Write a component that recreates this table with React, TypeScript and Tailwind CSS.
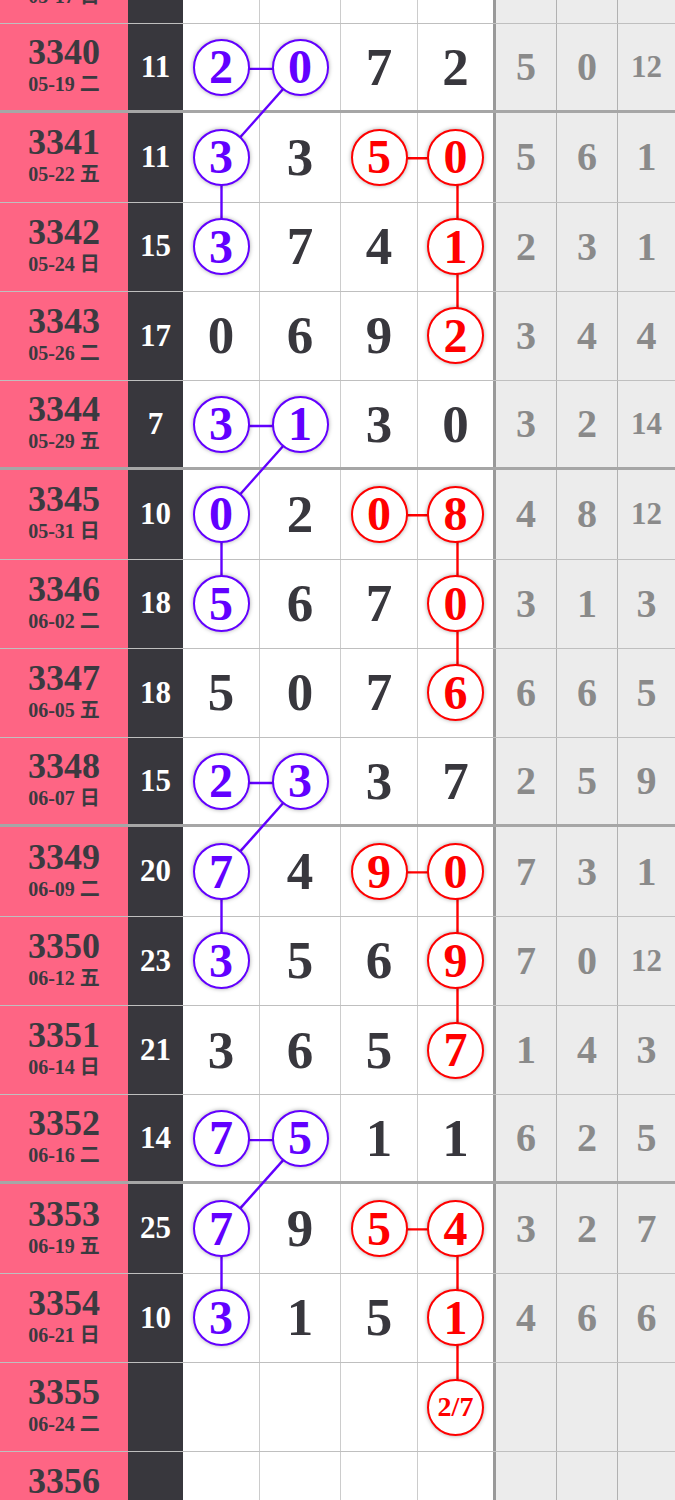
import React from 'react'

const ROW_H = 89.27
const TOP = -65.27
const NUM_W = [77, 81, 77, 78]
const NUM_X = [38.5, 118, 197, 274.5]

type Row = {
  id: string
  date?: string
  sum?: string
  nums: string[]
  marks: string
  stats: string[]
  thick?: boolean
}

const rows: Row[] = [
  { id: '3339', date: '05-17 日', nums: ['', '', '', ''], marks: '----', stats: ['', '', ''] },
  { id: '3340', date: '05-19 二', sum: '11', nums: ['2', '0', '7', '2'], marks: 'pp--', stats: ['5', '0', '12'], thick: true },
  { id: '3341', date: '05-22 五', sum: '11', nums: ['3', '3', '5', '0'], marks: 'p-rr', stats: ['5', '6', '1'] },
  { id: '3342', date: '05-24 日', sum: '15', nums: ['3', '7', '4', '1'], marks: 'p--r', stats: ['2', '3', '1'] },
  { id: '3343', date: '05-26 二', sum: '17', nums: ['0', '6', '9', '2'], marks: '---r', stats: ['3', '4', '4'] },
  { id: '3344', date: '05-29 五', sum: '7', nums: ['3', '1', '3', '0'], marks: 'pp--', stats: ['3', '2', '14'], thick: true },
  { id: '3345', date: '05-31 日', sum: '10', nums: ['0', '2', '0', '8'], marks: 'p-rr', stats: ['4', '8', '12'] },
  { id: '3346', date: '06-02 二', sum: '18', nums: ['5', '6', '7', '0'], marks: 'p--r', stats: ['3', '1', '3'] },
  { id: '3347', date: '06-05 五', sum: '18', nums: ['5', '0', '7', '6'], marks: '---r', stats: ['6', '6', '5'] },
  { id: '3348', date: '06-07 日', sum: '15', nums: ['2', '3', '3', '7'], marks: 'pp--', stats: ['2', '5', '9'], thick: true },
  { id: '3349', date: '06-09 二', sum: '20', nums: ['7', '4', '9', '0'], marks: 'p-rr', stats: ['7', '3', '1'] },
  { id: '3350', date: '06-12 五', sum: '23', nums: ['3', '5', '6', '9'], marks: 'p--r', stats: ['7', '0', '12'] },
  { id: '3351', date: '06-14 日', sum: '21', nums: ['3', '6', '5', '7'], marks: '---r', stats: ['1', '4', '3'] },
  { id: '3352', date: '06-16 二', sum: '14', nums: ['7', '5', '1', '1'], marks: 'pp--', stats: ['6', '2', '5'], thick: true },
  { id: '3353', date: '06-19 五', sum: '25', nums: ['7', '9', '5', '4'], marks: 'p-rr', stats: ['3', '2', '7'] },
  { id: '3354', date: '06-21 日', sum: '10', nums: ['3', '1', '5', '1'], marks: 'p--r', stats: ['4', '6', '6'] },
  { id: '3355', date: '06-24 二', nums: ['', '', '', '2/7'], marks: '---r', stats: ['', '', ''] },
  { id: '3356', nums: ['', '', '', ''], marks: '----', stats: ['', '', ''] },
]

// connecting lines: [row, col] -> [row, col]
const segs: { a: [number, number]; b: [number, number]; c: string }[] = []
for (const b of [1, 5, 9, 13]) {
  segs.push({ a: [b, 0], b: [b, 1], c: '#6200ff' })
  segs.push({ a: [b, 1], b: [b + 1, 0], c: '#6200ff' })
  segs.push({ a: [b + 1, 0], b: [b + 2, 0], c: '#6200ff' })
  segs.push({ a: [b + 1, 2], b: [b + 1, 3], c: '#ff0000' })
  segs.push({ a: [b + 1, 3], b: [b + 2, 3], c: '#ff0000' })
  segs.push({ a: [b + 2, 3], b: [b + 3, 3], c: '#ff0000' })
}

const serif = "font-['Liberation_Serif','Noto_Sans_CJK_SC',serif]"

function Ball({ v, m }: { v: string; m: string }) {
  if (!v) return null
  if (m === '-') return <span className="text-[53px] leading-none font-bold text-[#38373d]">{v}</span>
  const purple = m === 'p'
  const small = v.length > 1
  return (
    <div
      className={
        'relative z-10 flex h-[57px] w-[57px] items-center justify-center rounded-full border-[2.5px] bg-white shadow-[0_0_4px_rgba(0,0,0,0.35)] font-bold leading-none ' +
        (purple ? 'border-[#6200ff] text-[#6200ff] ' : 'border-[#ff0000] text-[#ff0000] ') +
        (small ? 'text-[28px]' : 'text-[48px]')
      }
    >
      {v}
    </div>
  )
}

export default function App() {
  const y = (r: number) => r * ROW_H + ROW_H / 2
  return (
    <div className={`h-[1500px] w-[675px] overflow-hidden bg-white ${serif}`}>
      <div className="relative" style={{ marginTop: TOP }}>
        {rows.map((r) => (
          <div
            key={r.id}
            className={
              'flex h-[89.27px] ' +
              (r.thick ? 'border-b-[3px] border-black/35' : 'border-b border-black/25')
            }
          >
            <div className="flex w-[128px] shrink-0 flex-col items-center justify-center bg-[#fe6584] pb-[3px] text-[#3b3a40]">
              <span className="text-[36px] font-bold leading-[37px]">{r.id}</span>
              <span className="text-[20px] font-bold leading-[26px]">{r.date ?? '\u00a0'}</span>
            </div>
            <div className="flex w-[55px] shrink-0 items-center justify-center bg-[#38373d] text-[31px] font-bold text-white">
              {r.sum}
            </div>
            {r.nums.map((n, i) => (
              <div
                key={i}
                className={
                  'flex shrink-0 items-center justify-center ' +
                  (i === 3 ? 'border-r-[3px] border-black/40' : 'border-r border-black/20')
                }
                style={{ width: NUM_W[i] }}
              >
                <Ball v={n} m={r.marks[i]} />
              </div>
            ))}
            {r.stats.map((s, i) => (
              <div
                key={i}
                className={
                  'flex shrink-0 items-center justify-center bg-[#ececec] font-bold text-[#8a8a8a] ' +
                  (i < 2 ? 'w-[61px] border-r border-black/25 ' : 'flex-1 ') +
                  (s.length > 1 ? 'text-[31px]' : 'text-[40px]')
                }
              >
                {s}
              </div>
            ))}
          </div>
        ))}
        <svg className="pointer-events-none absolute left-[183px] top-0" width={313} height={rows.length * ROW_H}>
          {segs.map((s, i) => (
            <line
              key={i}
              x1={NUM_X[s.a[1]]}
              y1={y(s.a[0])}
              x2={NUM_X[s.b[1]]}
              y2={y(s.b[0])}
              stroke={s.c}
              strokeWidth={2.4}
            />
          ))}
        </svg>
      </div>
    </div>
  )
}
